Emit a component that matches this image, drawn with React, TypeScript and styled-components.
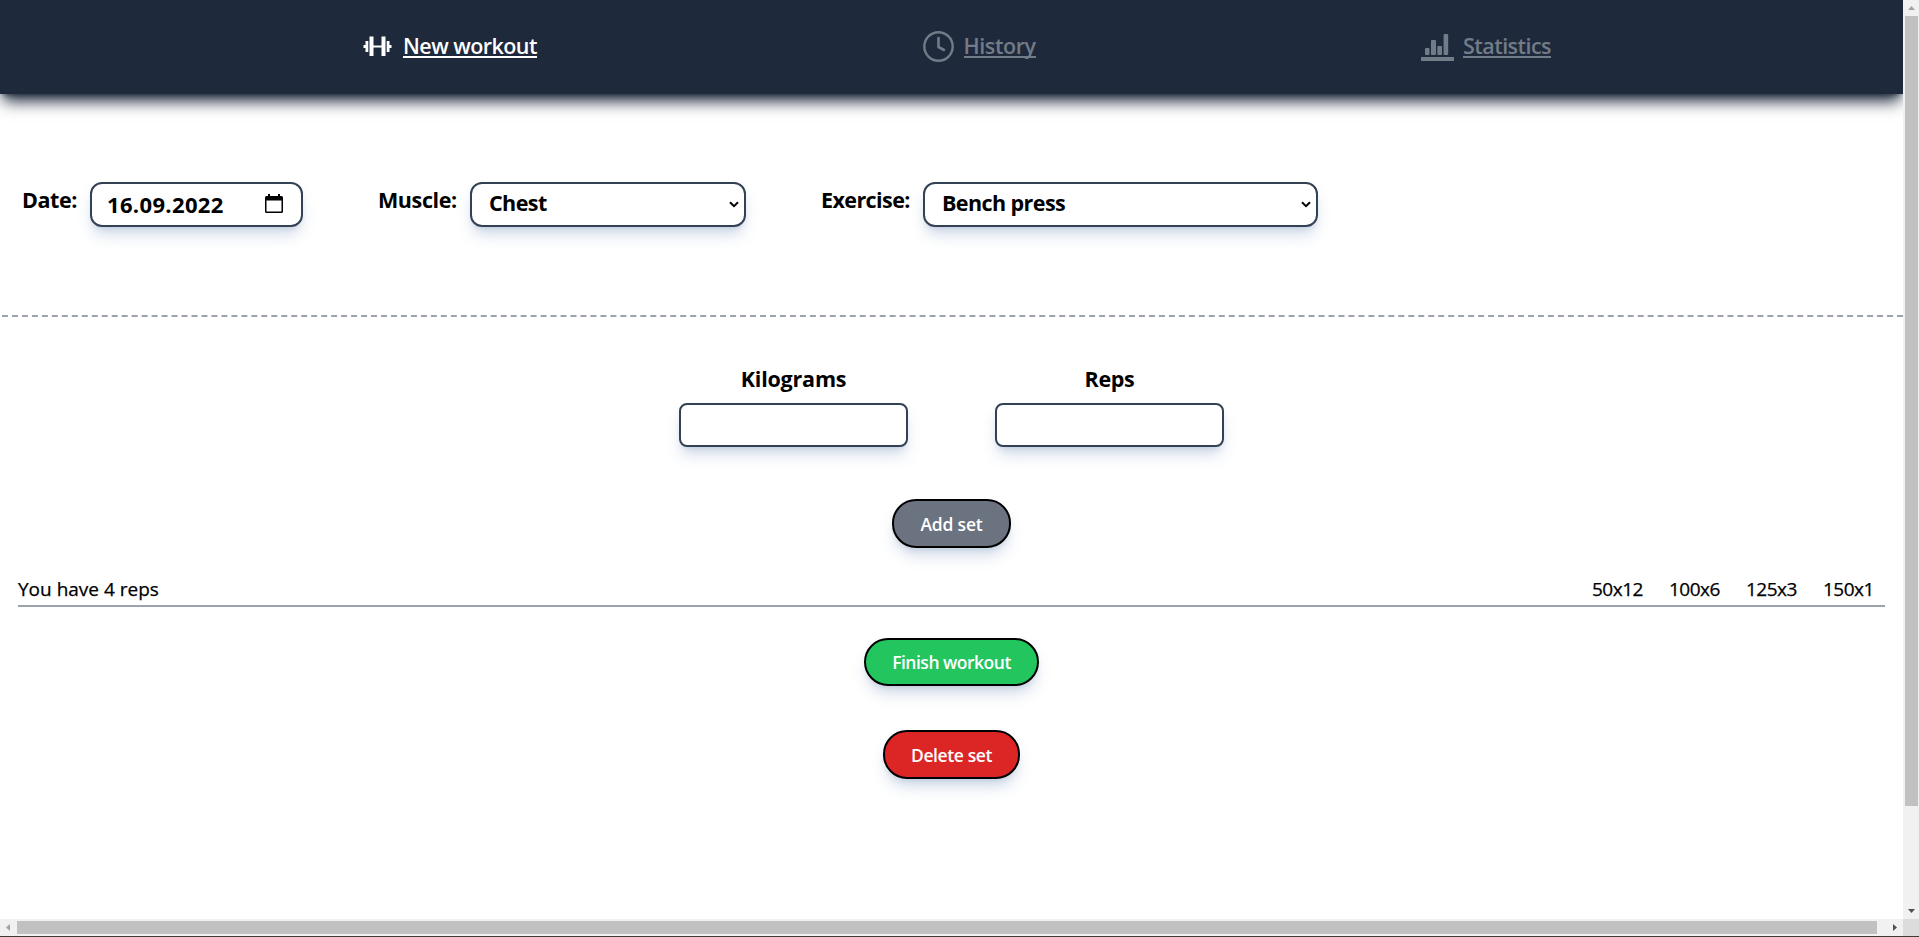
import React from "react";
import styled, { createGlobalStyle } from "styled-components";

const GlobalStyle = createGlobalStyle`
  *, *::before, *::after { box-sizing: border-box; }
  body { margin: 0; background: #fff; overflow: hidden; }
  body, input, button { font-family: "Segoe UI", "Open Sans", "Noto Sans", sans-serif; }
`;

const softShadow = "0 10px 15px -3px rgba(80, 115, 165, 0.27), 0 4px 6px -4px rgba(80, 115, 165, 0.27)";

const Window = styled.div`
  display: grid;
  grid-template-columns: minmax(0, 1fr) 16px;
  grid-template-rows: minmax(0, 1fr) 17px 1px;
  width: 100vw;
  height: 100vh;
`;

const Page = styled.div`
  overflow: hidden;
  color: #000;
`;

const Header = styled.header`
  display: flex;
  justify-content: space-between;
  align-items: flex-start;
  height: 94px;
  padding: 31px 352px 0 363px;
  background: #1e293b;
  box-shadow: 0 10px 15px -3px #1e293b, 0 4px 6px -4px #1e293b;
`;

const NavItem = styled.a<{ $active?: boolean; $gap: number }>`
  display: flex;
  align-items: flex-start;
  gap: ${(p) => p.$gap}px;
  color: ${(p) => (p.$active ? "#fff" : "#727b88")};
  svg { display: block; flex: none; }
`;

const NavText = styled.span<{ $width: number; $spacing: number }>`
  width: ${(p) => p.$width}px;
  height: 27px;
  font-size: 21.5px;
  font-weight: 600;
  line-height: 30px;
  letter-spacing: ${(p) => p.$spacing}px;
  white-space: nowrap;
  border-bottom: 2px solid currentColor;
`;

const Filters = styled.section`
  display: flex;
  align-items: flex-start;
  gap: 75px;
  height: 223px;
  margin-left: 2px;
  padding: 88px 0 0 20px;
  border-bottom: 2px dashed #9ca3af;
`;

const Field = styled.div`
  display: flex;
  align-items: flex-start;
`;

const Label = styled.label<{ $width?: number; $spacing?: number }>`
  width: ${(p) => (p.$width ? `${p.$width}px` : "auto")};
  margin-top: ${(p) => (p.$width ? 5 : 0)}px;
  font-size: 21.5px;
  font-weight: 700;
  line-height: 26px;
  letter-spacing: ${(p) => p.$spacing ?? 0}px;
  white-space: nowrap;
`;

const Picker = styled.div<{ $width: number; $date?: boolean }>`
  display: flex;
  align-items: center;
  justify-content: space-between;
  width: ${(p) => p.$width}px;
  height: 45px;
  padding: ${(p) => (p.$date ? "0 18px 1px 15px" : "0 5px 4px 17px")};
  border: 2px solid #334155;
  border-radius: 12px;
  background: #fff;
  box-shadow: ${softShadow};
  font-size: ${(p) => (p.$date ? 22 : 21.5)}px;
  font-weight: 700;
  line-height: 30px;
  letter-spacing: ${(p) => (p.$date ? 0.35 : -0.58)}px;
`;

const Entry = styled.section`
  display: flex;
  flex-direction: column;
  align-items: center;
  padding-top: 49px;
`;

const InputRow = styled.div`
  display: flex;
  gap: 87px;
  margin-bottom: 52px;
`;

const InputColumn = styled.div`
  display: flex;
  flex-direction: column;
  align-items: center;
  gap: 11px;
`;

const NumberInput = styled.input`
  width: 229px;
  height: 44px;
  border: 2px solid #334155;
  border-radius: 8px;
  background: #fff;
  box-shadow: ${softShadow};
`;

const PillButton = styled.button<{ $width: number; $height?: number; $color: string; $spacing?: number }>`
  width: ${(p) => p.$width}px;
  height: ${(p) => p.$height ?? 49}px;
  padding: 0;
  border: 2px solid #000;
  border-radius: 24px;
  background: ${(p) => p.$color};
  box-shadow: ${softShadow};
  color: #fff;
  font-size: 17.5px;
  font-weight: 600;
  letter-spacing: ${(p) => p.$spacing ?? 0}px;
`;

const Summary = styled.div`
  display: flex;
  justify-content: space-between;
  align-self: stretch;
  height: 32px;
  margin: 27px 18px 31px;
  padding-right: 11px;
  border-bottom: 2px solid #9ca3af;
  font-size: 19px;
  font-weight: 500;
  line-height: 28px;
  -webkit-text-stroke: 0.25px #000;
`;

const SetList = styled.div`
  display: flex;
  gap: 26px;
  letter-spacing: -0.5px;
  span { width: 51px; white-space: nowrap; }
`;

const Actions = styled.div`
  display: flex;
  flex-direction: column;
  align-items: center;
  gap: 44px;
`;

const VerticalBar = styled.div`
  display: flex;
  flex-direction: column;
  align-items: center;
  background: #f1f1f1;
  svg { display: block; flex: none; }
`;

const VerticalThumb = styled.div`
  width: 13px;
  height: 790px;
  margin: 0 0 auto 1px;
  background: #c1c1c1;
`;

const HorizontalBar = styled.div`
  display: flex;
  align-items: center;
  background: #f1f1f1;
  svg { display: block; flex: none; }
`;

const HorizontalThumb = styled.div`
  width: 1860px;
  height: 13px;
  margin-right: auto;
  background: #c1c1c1;
`;

const Corner = styled.div`
  background: #dcdcdc;
`;

const BottomEdge = styled.div`
  grid-column: 1 / -1;
  background: #3d3b36;
`;

const Dumbbell = () => (
  <svg width="30" height="31" viewBox="0 0 30 31" fill="currentColor">
    <path d="M6.500 5.500h4v9h8v-9h4v19.500h-4v-8.500h-8V25h-4zM2.500 10h2.800v11H2.500zM0.500 14h2v3h-2zM23.700 10h2.800v11h-2.800zM26.500 14h2v3h-2z" />
  </svg>
);

const Clock = () => (
  <svg width="31" height="31" viewBox="0 0 31 31" fill="none" stroke="currentColor" strokeLinecap="round" strokeLinejoin="round">
    <circle cx="15.500" cy="15.500" r="14.200" strokeWidth="2.400" />
    <path d="M15.500 7v9l5.500 3" strokeWidth="2.600" />
  </svg>
);

const Bars = () => (
  <svg width="33" height="31" viewBox="0 0 33 31" fill="currentColor">
    <path d="M0 26h33v4H0z" />
    <rect x="4" y="17" width="4.500" height="7" rx="1" />
    <rect x="10" y="9" width="5" height="15" rx="1" />
    <rect x="16.300" y="15" width="4.700" height="9" rx="1" />
    <rect x="22.600" y="3" width="4.600" height="21" rx="1" />
  </svg>
);

const Calendar = () => (
  <svg width="18" height="20" viewBox="0 0 18 20">
    <path fillRule="evenodd" d="M3 0h2v2h8V0h2v2h1.500Q18 2 18 3.500v14Q18 19 16.500 19h-15Q0 19 0 17.500v-14Q0 2 1.500 2H3zM1.500 6.500v11h15v-11z" />
  </svg>
);

const Chevron = () => (
  <svg width="10" height="10" viewBox="0 0 10 10" fill="none" stroke="#000" strokeWidth="2">
    <path d="M1 4.200l4 4 4-4" />
  </svg>
);

export default function App() {
  return (
    <Window>
      <GlobalStyle />
      <Page>
        <Header>
          <NavItem $active $gap={10}><Dumbbell /><NavText $width={134} $spacing={-0.54}>New workout</NavText></NavItem>
          <NavItem $gap={10}><Clock /><NavText $width={72} $spacing={-0.4}>History</NavText></NavItem>
          <NavItem $gap={9}><Bars /><NavText $width={88} $spacing={-0.54}>Statistics</NavText></NavItem>
        </Header>
        <Filters>
          <Field>
            <Label $width={68} $spacing={-0.4}>Date:</Label>
            <Picker $width={213} $date>16.09.2022<Calendar /></Picker>
          </Field>
          <Field>
            <Label $width={92} $spacing={-0.4}>Muscle:</Label>
            <Picker $width={276}>Chest<Chevron /></Picker>
          </Field>
          <Field>
            <Label $width={102} $spacing={-0.58}>Exercise:</Label>
            <Picker $width={395}>Bench press<Chevron /></Picker>
          </Field>
        </Filters>
        <Entry>
          <InputRow>
            <InputColumn><Label $spacing={-0.2} htmlFor="kilograms">Kilograms</Label><NumberInput id="kilograms" /></InputColumn>
            <InputColumn><Label $spacing={-0.3} htmlFor="reps">Reps</Label><NumberInput id="reps" /></InputColumn>
          </InputRow>
          <PillButton $width={119} $color="#6b7280" $spacing={-0.2}>Add set</PillButton>
          <Summary>
            <span>You have 4 reps</span>
            <SetList>
              <span>50x12</span><span>100x6</span><span>125x3</span><span>150x1</span>
            </SetList>
          </Summary>
          <Actions>
            <PillButton $width={175} $height={48} $color="#22c55e" $spacing={-0.5}>Finish workout</PillButton>
            <PillButton $width={137} $color="#dc2626" $spacing={-0.4}>Delete set</PillButton>
          </Actions>
        </Entry>
      </Page>
      <VerticalBar>
        <svg width="16" height="16"><path d="M5 10h7L8.500 6z" fill="#a3a3a3" /></svg>
        <VerticalThumb />
        <svg width="16" height="16"><path d="M5 6h7l-3.500 4z" fill="#505050" /></svg>
      </VerticalBar>
      <HorizontalBar>
        <svg width="17" height="17"><path d="M10 5v7L6 8.500z" fill="#a3a3a3" /></svg>
        <HorizontalThumb />
        <svg width="17" height="17"><path d="M7 5v7l4-3.500z" fill="#505050" /></svg>
      </HorizontalBar>
      <Corner />
      <BottomEdge />
    </Window>
  );
}
